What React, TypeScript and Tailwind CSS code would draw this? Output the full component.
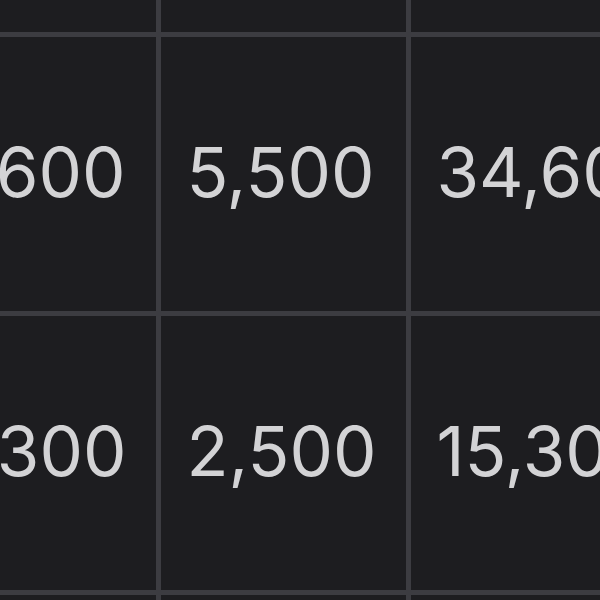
const rows = [
  ['', '', ''],
  ['9,600', '5,500', '34,600'],
  ['4,300', '2,500', '15,300'],
  ['', '', ''],
];

export default function App() {
  return (
    <div className="w-[600px] h-[600px] overflow-hidden bg-[#1d1d20]">
      <div
        className="grid grid-cols-[245px_245px_245px] gap-[5px] bg-[#3c3c41] w-max ml-[-89.5px] mt-[-242.5px] blur-[0.7px]"
        style={{ fontFamily: 'Inter, "Noto Sans", sans-serif' }}
      >
        {rows.map((row, i) =>
          row.map((val, j) => (
            <div
              key={`${i}-${j}`}
              className="h-[274px] bg-[#1d1d20] flex items-center pl-[26px] pb-[2px] text-[69px] leading-none text-[#d3d3d5] whitespace-nowrap"
            >
              {val}
            </div>
          ))
        )}
      </div>
    </div>
  );
}
